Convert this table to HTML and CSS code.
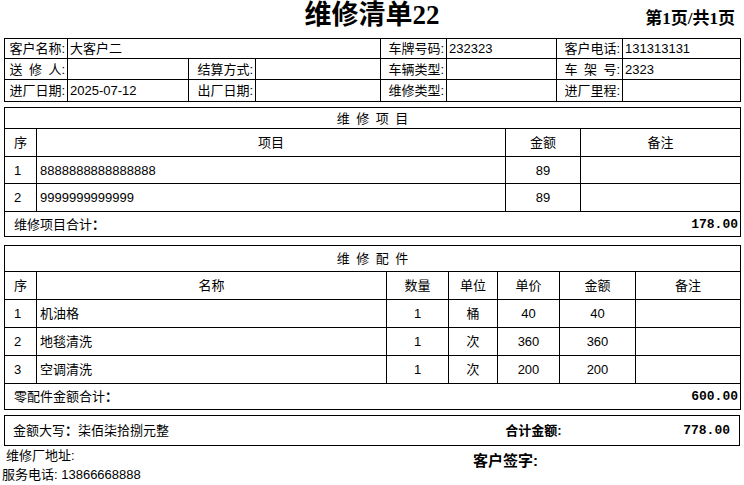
FILE: index.html
```html
<!DOCTYPE html>
<html lang="zh-CN">
<head>
<meta charset="utf-8">
<title>维修清单22</title>
<link rel="stylesheet" href="styles.css">
</head>
<body>
<div class="page">
  <header class="head">
    <div></div>
    <h1 class="title">维修清单22</h1>
    <div class="pager">第1页/共1页</div>
  </header>

  <table class="info">
    <colgroup>
      <col style="width:63px"><col style="width:121px"><col style="width:67px"><col style="width:125px">
      <col style="width:66px"><col style="width:110px"><col style="width:66px"><col style="width:118px">
    </colgroup>
    <tr class="r1">
      <td class="lbl">客户名称:</td><td class="val" colspan="3">大客户二</td>
      <td class="lbl">车牌号码:</td><td class="val">232323</td>
      <td class="lbl">客户电话:</td><td class="val">131313131</td>
    </tr>
    <tr class="r2">
      <td class="lbl">送&ensp;修&ensp;人:</td><td class="val"></td>
      <td class="lbl">结算方式:</td><td class="val"></td>
      <td class="lbl">车辆类型:</td><td class="val"></td>
      <td class="lbl">车&ensp;架&ensp;号:</td><td class="val">2323</td>
    </tr>
    <tr class="r3">
      <td class="lbl">进厂日期:</td><td class="val">2025-07-12</td>
      <td class="lbl">出厂日期:</td><td class="val"></td>
      <td class="lbl">维修类型:</td><td class="val"></td>
      <td class="lbl">进厂里程:</td><td class="val"></td>
    </tr>
  </table>

  <table class="sec sec1">
    <colgroup>
      <col style="width:32px"><col style="width:469px"><col style="width:75px"><col style="width:160px">
    </colgroup>
    <tr class="cap cap1"><td colspan="4">维&ensp;修&ensp;项&ensp;目</td></tr>
    <tr class="hdr"><td class="no">序</td><td class="c">项目</td><td class="c">金额</td><td class="c">备注</td></tr>
    <tr class="row row-short"><td class="no">1</td><td class="name">8888888888888888</td><td class="c">89</td><td></td></tr>
    <tr class="row"><td class="no">2</td><td class="name">9999999999999</td><td class="c">89</td><td></td></tr>
    <tr class="sum sum1"><td colspan="4"><div class="sumline"><span class="sumlbl">维修项目合计<b>：</b></span><span class="num">178.00</span></div></td></tr>
  </table>

  <table class="sec sec2">
    <colgroup>
      <col style="width:32px"><col style="width:350px"><col style="width:62px"><col style="width:49px">
      <col style="width:62px"><col style="width:76px"><col style="width:105px">
    </colgroup>
    <tr class="cap cap2"><td colspan="7">维&ensp;修&ensp;配&ensp;件</td></tr>
    <tr class="hdr"><td class="no">序</td><td class="c">名称</td><td class="c">数量</td><td class="c">单位</td><td class="c">单价</td><td class="c">金额</td><td class="c">备注</td></tr>
    <tr class="row"><td class="no">1</td><td class="name">机油格</td><td class="c">1</td><td class="c">桶</td><td class="c">40</td><td class="c">40</td><td></td></tr>
    <tr class="row"><td class="no">2</td><td class="name">地毯清洗</td><td class="c">1</td><td class="c">次</td><td class="c">360</td><td class="c">360</td><td></td></tr>
    <tr class="row"><td class="no">3</td><td class="name">空调清洗</td><td class="c">1</td><td class="c">次</td><td class="c">200</td><td class="c">200</td><td></td></tr>
    <tr class="sum"><td colspan="7"><div class="sumline"><span class="sumlbl">零配件金额合计<b>：</b></span><span class="num">600.00</span></div></td></tr>
  </table>

  <div class="grand">
    <span class="words">金额大写<b>：</b>柒佰柒拾捌元整</span>
    <span class="gl">合计金额:</span>
    <span class="num">778.00</span>
  </div>
</div>

<footer class="foot">
  <div class="contact">
    <div class="addr">维修厂地址:</div>
    <div class="phone">服务电话: 13866668888</div>
  </div>
  <div class="sign">客户签字:</div>
</footer>
</body>
</html>
```

FILE: styles.css
```css
* { box-sizing: border-box; }

html, body {
  margin: 0;
  padding: 0;
  background: #fff;
  color: #000;
}

body {
  font-family: "Liberation Sans", "Noto Sans CJK SC", sans-serif;
  font-size: 13px;
  line-height: 15px;
}

.page {
  padding: 0 4px;
  width: 744px;
}

.head {
  display: grid;
  grid-template-columns: 1fr auto 1fr;
  grid-template-rows: 38px;
  height: 38px;
  overflow: hidden;
}

.title {
  margin: 0;
  padding-top: 1px;
  font-family: "Liberation Serif", "Noto Sans CJK SC", serif;
  font-size: 27px;
  line-height: 28px;
  font-weight: 700;
}

.pager {
  justify-self: end;
  align-self: start;
  padding-top: 10px;
  padding-right: 5px;
  font-family: "Liberation Serif", "Noto Sans CJK SC", serif;
  font-size: 17px;
  line-height: 18px;
  font-weight: 700;
}

table {
  border-collapse: collapse;
  table-layout: fixed;
  width: 736px;
}

td {
  border: 1px solid #000;
  padding: 0;
  white-space: nowrap;
  overflow: hidden;
}

.info .r1 { height: 20px; }
.info .r2 { height: 21px; }
.info .r3 { height: 22px; }
.info .lbl { text-align: right; padding-right: 2px; }
.info .val { padding-left: 2px; }

.sec1 { margin-top: 5px; }
.sec2 { margin-top: 8px; }

.cap td { text-align: center; }
.cap1 { height: 21px; }
.cap2 { height: 26px; }
.hdr { height: 28px; }
.row { height: 28px; }
.row-short { height: 27px; }
.sum { height: 26px; }
.sum1 { height: 25px; }

.no { padding-left: 9px; }
.name { padding-left: 3px; }
.c { text-align: center; }

.sumline {
  display: flex;
  justify-content: space-between;
  align-items: center;
  padding: 0 2px 0 9px;
}

.sumlbl b { font-weight: 700; }

.num {
  font-family: "Liberation Mono", monospace;
  font-weight: 700;
  font-size: 13px;
}

.grand {
  margin-top: 5px;
  border: 1px solid #000;
  height: 31px;
  display: flex;
  align-items: center;
  padding: 0 9px 0 8px;
}

.words { flex: 1; }
.words b { font-weight: 700; }

.gl {
  font-weight: 700;
  width: 178px;
}

.foot {
  display: grid;
  grid-template-columns: 471px auto;
  padding-left: 2px;
  padding-top: 1px;
}

.addr {
  padding-left: 4px;
  line-height: 17px;
}

.phone {
  line-height: 22px;
}

.sign {
  align-self: start;
  padding-top: 6px;
  font-weight: 700;
  font-size: 15px;
}
```
